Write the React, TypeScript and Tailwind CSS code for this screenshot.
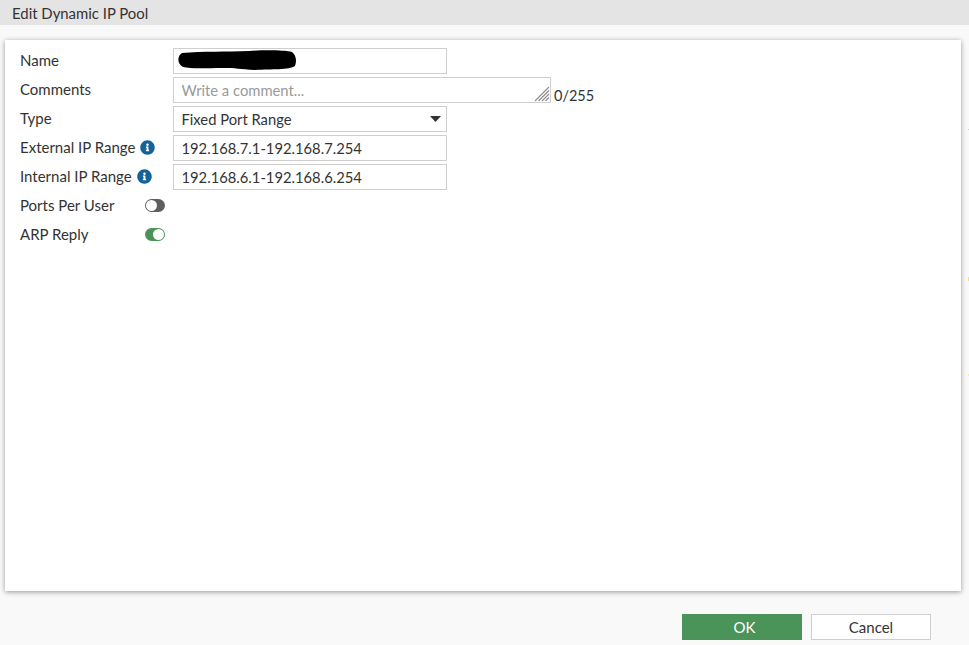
import { FaInfoCircle } from "react-icons/fa";

function Row({ label, info, children }: { label: string; info?: boolean; children: React.ReactNode }) {
  return (
    <div className="flex items-center h-[26px] mb-[3px]">
      <div className="w-[153px] shrink-0 flex items-center gap-[5px] leading-[26px] -mt-[2px]">
        <span>{label}</span>
        {info && <FaInfoCircle className="text-[#14629a] w-[15px] h-[15px]" />}
      </div>
      {children}
    </div>
  );
}

function Toggle({ on }: { on?: boolean }) {
  return (
    <div className={`w-[20px] h-[13px] ml-[-28px] mr-[8px] -mt-[2px] rounded-full flex items-center px-[1px] ${on ? "bg-[#4a9359] justify-end" : "bg-[#5e5e5e] justify-start"}`}>
      <span className="w-[11px] h-[11px] rounded-full bg-white" />
    </div>
  );
}

const inputCls = "w-[274px] h-[26px] border border-[#cfcfcf] bg-white pl-[7.5px] text-[14.75px] text-[#333] outline-none";

export default function App() {
  return (
    <div className="relative h-screen flex flex-col overflow-hidden bg-[#f9f9f9] text-[15px] text-[#333] font-['Lato',sans-serif]">
      <div className="h-[25px] shrink-0 bg-[#e4e4e4] pl-[12px] text-[14.9px] leading-[26px] text-[#333]">Edit Dynamic IP Pool</div>

      <div className="h-[551px] mt-[15px] ml-[5px] w-[956px] shrink-0 bg-white shadow-[0_1px_5px_rgba(0,0,0,0.4)] pl-[15px] pt-[8px]">
        <Row label="Name">
          <div className="relative">
            <input readOnly value="" className={inputCls} />
            <svg className="absolute left-[4px] top-[1px]" width="120" height="22" viewBox="0 0 120 22">
              <path d="M5 4 C25 2 50 3 72 2 C85 1 108 1 115 3 C119 6 120 12 118 17 C112 21 95 20 78 21 C62 20 60 19 45 19 C30 19 14 20 6 18 C0 15 0 7 5 4Z" fill="#000" />
            </svg>
          </div>
        </Row>
        <Row label="Comments">
          <div className="relative">
            <input readOnly placeholder="Write a comment..." className={`${inputCls} w-[378px] placeholder:text-[#999]`} />
            <svg className="absolute right-[1px] bottom-[1px]" width="16" height="16" viewBox="0 0 16 16" stroke="#8c8c8c" strokeWidth="1.1">
              <path d="M1 15 L15 1 M4.5 15 L15 4.5 M8 15 L15 8 M11.5 15 L15 11.5" />
            </svg>
          </div>
          <span className="self-end ml-[3px] -mb-[3px] leading-[20px] text-[14.5px]">0/255</span>
        </Row>
        <Row label="Type">
          <div className={`${inputCls} flex items-center justify-between pr-[5px]`}>
            <span>Fixed Port Range</span>
            <svg width="11" height="6" viewBox="0 0 11 6"><path d="M0 0 H11 L5.5 6Z" fill="#333" /></svg>
          </div>
        </Row>
        <Row label="External IP Range" info>
          <input readOnly value="192.168.7.1-192.168.7.254" className={inputCls} />
        </Row>
        <Row label="Internal IP Range" info>
          <input readOnly value="192.168.6.1-192.168.6.254" className={inputCls} />
        </Row>
        <Row label="Ports Per User">
          <Toggle />
        </Row>
        <Row label="ARP Reply">
          <Toggle on />
        </Row>
      </div>

      <div className="flex justify-end gap-[9px] pr-[38px] pt-[23px]">
        <button className="w-[120px] h-[26px] bg-[#4a9359] text-white text-[15px] pl-[5px]">OK</button>
        <button className="w-[120px] h-[26px] bg-white border border-[#cfcfcf] text-[15px] text-[#333]">Cancel</button>
      </div>

      <span className="absolute left-[968px] top-[129px] w-[1px] h-[1px] bg-[#f5c08a]" />
      <span className="absolute left-[968px] top-[277px] w-[1px] h-[4px] bg-[#fbd98a]" />
      <span className="absolute left-[968px] top-[374px] w-[1px] h-[2px] bg-[#fbe9a8]" />
    </div>
  );
}
